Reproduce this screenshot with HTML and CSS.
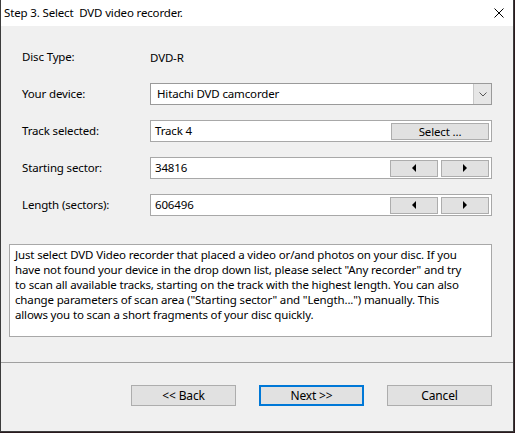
FILE: index.html
```html
<!DOCTYPE html>
<html lang="en">
<head>
    <meta charset="UTF-8">
    <title>Step 3. Select DVD video recorder.</title>
    <link rel="stylesheet" href="styles.css">
</head>
<body>
    <div class="window">
        <div class="titlebar">
            <span class="title">Step 3. Select&nbsp; DVD video recorder.</span>
            <svg class="close" width="10" height="10" viewBox="0 0 10 10">
                <path d="M0.5 0.5 L9.5 9.5 M9.5 0.5 L0.5 9.5" stroke="#000" stroke-width="1" fill="none"/>
            </svg>
        </div>
        <div class="content">
            <div class="row">
                <label>Disc Type:</label>
                <span class="value">DVD-R</span>
            </div>
            <div class="row">
                <label>Your device:</label>
                <div class="field combo">
                    <span class="field-text">Hitachi DVD camcorder</span>
                    <span class="drop">
                        <svg width="8" height="5" viewBox="0 0 8 5"><path d="M0.5 0.5 L4 4 L7.5 0.5" stroke="#555" fill="none"/></svg>
                    </span>
                </div>
            </div>
            <div class="row">
                <label>Track selected:</label>
                <div class="field">
                    <span class="field-text">Track 4</span>
                    <button class="btn wide">Select ...</button>
                </div>
            </div>
            <div class="row">
                <label>Starting sector:</label>
                <div class="field">
                    <span class="field-text">34816</span>
                    <button class="btn arrow"><span class="tri-left"></span></button>
                    <button class="btn arrow"><span class="tri-right"></span></button>
                </div>
            </div>
            <div class="row">
                <label>Length (sectors):</label>
                <div class="field">
                    <span class="field-text">606496</span>
                    <button class="btn arrow"><span class="tri-left"></span></button>
                    <button class="btn arrow"><span class="tri-right"></span></button>
                </div>
            </div>
            <div class="info">
                Just select DVD Video recorder that placed a video or/and photos on your disc. If you<br>
                have not found your device in the drop down list, please select "Any recorder" and try<br>
                to scan all available tracks, starting on the track with the highest length. You can also<br>
                change parameters of scan area ("Starting sector" and "Length...") manually. This<br>
                allows you to scan a short fragments of your disc quickly.
            </div>
        </div>
        <div class="footer">
            <button class="btn nav">&lt;&lt; Back</button>
            <button class="btn nav default">Next &gt;&gt;</button>
            <button class="btn nav">Cancel</button>
        </div>
    </div>
</body>
</html>
```

FILE: styles.css
```css
body {
    margin: 0;
    background-color: #2a1a1e;
    font-family: "Segoe UI", "Noto Sans", Arial, sans-serif;
    font-size: 11.5px;
    letter-spacing: -0.15px;
    color: #000;
}
.window {
    width: 514px;
    height: 432px;
    box-sizing: border-box;
    border: 1px solid #3c3c3c;
    border-top: none;
    display: flex;
    flex-direction: column;
    background-color: #f0f0f0;
}
.titlebar {
    height: 26px;
    background-color: #fff;
    display: flex;
    align-items: center;
    padding: 0 9px 0 3px;
}
.title { flex: 1; line-height: 16px; }
.close { display: block; }

.content {
    flex: 1;
    padding: 20px 21px 0 8px;
    display: flex;
    flex-direction: column;
    gap: 15px;
}
.row {
    display: grid;
    grid-template-columns: 128px 1fr;
    align-items: center;
    height: 22px;
    padding-left: 13px;
}
.row label { line-height: 16px; }

.field {
    height: 22px;
    box-sizing: border-box;
    background-color: #fff;
    border: 1px solid #a8a8a8;
    display: flex;
    align-items: center;
    padding: 0 2px 0 4px;
    gap: 3px;
}
.field-text { flex: 1; line-height: 16px; }
.combo { padding: 0 0 0 6px; border-color: #9a9a9a; }
.drop {
    width: 17px;
    height: 20px;
    background-color: #e6e6e6;
    border-left: 1px solid #c8c8c8;
    display: flex;
    align-items: center;
    justify-content: center;
}

.btn {
    font: inherit;
    letter-spacing: inherit;
    color: #000;
    background-color: #e1e1e1;
    border: 1px solid #adadad;
    padding: 0;
    margin: 0;
    display: flex;
    align-items: center;
    justify-content: center;
}
.wide { width: 98px; height: 17px; }
.arrow { width: 48px; height: 17px; }
.tri-left, .tri-right {
    width: 0;
    height: 0;
    border-top: 4px solid transparent;
    border-bottom: 4px solid transparent;
}
.tri-left { border-right: 4px solid #000; }
.tri-right { border-left: 4px solid #000; }

.info {
    margin-top: 13px;
    height: 93px;
    box-sizing: border-box;
    background-color: #fff;
    border: 1px solid #a8a8a8;
    padding: 2px 5px;
    line-height: 15px;
    white-space: nowrap;
    overflow: hidden;
}

.footer {
    height: 69px;
    box-sizing: border-box;
    border-top: 1px solid #a0a0a0;
    display: flex;
    justify-content: flex-end;
    align-items: flex-start;
    gap: 23px;
    padding: 22px 21px 0 0;
}
.nav { width: 105px; height: 21px; font-size: 12px; }
.default { border: 2px solid #0078d7; }
```
